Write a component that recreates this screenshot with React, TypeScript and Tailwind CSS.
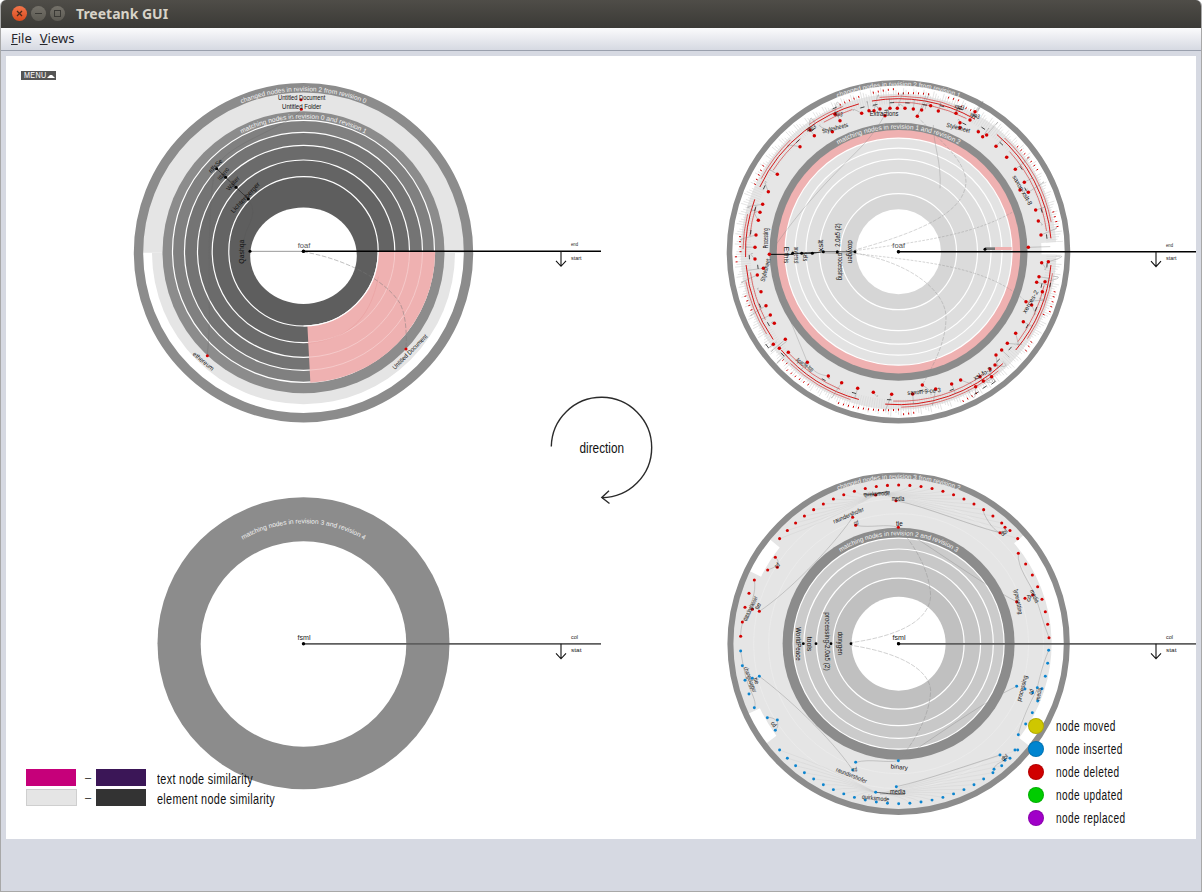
import React from "react";

const FONT = "'Liberation Sans', Arial, sans-serif";
const rad = (d: number) => (d * Math.PI) / 180;
const pt = (cx: number, cy: number, r: number, a: number): [number, number] => [cx + r * Math.cos(rad(a)), cy + r * Math.sin(rad(a))];

function sector(cx: number, cy: number, r0: number, r1: number, a0: number, a1: number) {
  const [x0, y0] = pt(cx, cy, r1, a0);
  const [x1, y1] = pt(cx, cy, r1, a1);
  const [x2, y2] = pt(cx, cy, r0, a1);
  const [x3, y3] = pt(cx, cy, r0, a0);
  const l = a1 - a0 > 180 ? 1 : 0;
  return `M${x0} ${y0}A${r1} ${r1} 0 ${l} 1 ${x1} ${y1}L${x2} ${y2}A${r0} ${r0} 0 ${l} 0 ${x3} ${y3}Z`;
}

function arcPath(cx: number, cy: number, r: number, a0: number, a1: number) {
  const [x0, y0] = pt(cx, cy, r, a0);
  const [x1, y1] = pt(cx, cy, r, a1);
  return `M${x0} ${y0}A${r} ${r} 0 ${a1 - a0 > 180 ? 1 : 0} 1 ${x1} ${y1}`;
}

function ArcText({ id, cx, cy, r, half, text, size = 6.6 }: { id: string; cx: number; cy: number; r: number; half: number; text: string; size?: number }) {
  const len = r * 2 * rad(half) * 0.98;
  return (
    <g>
      <defs>
        <path id={id} d={arcPath(cx, cy, r, -90 - half, -90 + half)} />
      </defs>
      <text fill="#f2f2f2" fontSize={size} fontFamily={FONT}>
        <textPath href={`#${id}`} startOffset="1%" textLength={len} lengthAdjust="spacingAndGlyphs">
          {text}
        </textPath>
      </text>
    </g>
  );
}

/* label inside a group scaled by 1/3 */
function Lb({ x, y, r = 0, len, t, fill = "#111", size = 19 }: { x: number; y: number; r?: number; len: number; t: string; fill?: string; size?: number }) {
  return (
    <text
      transform={`translate(${x} ${y}) rotate(${r})`}
      textAnchor="middle"
      dominantBaseline="central"
      fontSize={size}
      fontFamily={FONT}
      fill={fill}
      textLength={len}
      lengthAdjust="spacingAndGlyphs"
    >
      {t}
    </text>
  );
}

function Dots({ pts, fill, r = 4.5 }: { pts: number[][]; fill: string; r?: number }) {
  return (
    <g fill={fill}>
      {pts.map(([x, y], i) => (
        <circle key={i} cx={x} cy={y} r={r} />
      ))}
    </g>
  );
}

function Axis({ x, y, xEnd, a, b, color = "#000", w = 1.4 }: { x: number; y: number; xEnd: number; a: string; b: string; color?: string; w?: number }) {
  const ax = xEnd === 601 ? 561 : 1156;
  const lx = ax + 10;
  return (
    <g>
      <line x1={x} y1={y} x2={xEnd} y2={y} stroke={color} strokeWidth={w} />
      <circle cx={x} cy={y} r={1.7} fill="#000" />
      <path d={`M${ax} ${y}V${y + 15}M${ax - 5} ${y + 9.5}L${ax} ${y + 15}L${ax + 5} ${y + 9.5}`} fill="none" stroke="#111" strokeWidth={1.1} />
      <text x={lx} y={y - 5} fontSize={5.5} fontFamily={FONT} fill="#222" textLength={7} lengthAdjust="spacingAndGlyphs">{a}</text>
      <text x={lx} y={y + 8.5} fontSize={5.5} fontFamily={FONT} fill="#222" textLength={10.5} lengthAdjust="spacingAndGlyphs">{b}</text>
    </g>
  );
}

function ChartOne() {
  const cx = 303.5, cy = 251.3;
  const rings: [number, string][] = [[131, "#808080"], [119, "#747474"], [106, "#6b6b6b"], [91.3, "#646464"], [74.7, "#5e5e5e"]];
  return (
    <g>
      <path d={sector(cx, 252.7, 0, 161, 180, 360)} fill="#e5e5e5" />
      <path d={sector(cx, 252.7, 0, 151.5, 0, 180)} fill="#e5e5e5" />
      <circle cx={cx} cy={252.7} r={165} fill="none" stroke="#8c8c8c" strokeWidth={9.4} />
      <circle cx={cx} cy={252.3} r={141} fill="#8c8c8c" />
      {rings.map(([r, c]) => (
        <circle key={r} cx={cx} cy={cy} r={r} fill={c} stroke="#fff" strokeWidth={1.2} />
      ))}
      <path d={sector(cx, cy, 74.7, 131, 0, 87)} fill="#efb1b1" />
      <g fill="none" stroke="#f6cfcf" strokeWidth={0.8}>
        <path d={arcPath(cx, cy, 91.3, 0, 87)} />
        <path d={arcPath(cx, cy, 106, 0, 87)} />
        <path d={arcPath(cx, cy, 119, 0, 87)} />
      </g>
      <path d={arcPath(cx, cy, 74.7, 0, 90)} fill="none" stroke="#fff" strokeWidth={1.2} />
      <path d={arcPath(cx, cy, 131, 0, 87)} fill="none" stroke="#efb1b1" strokeWidth={1.2} />
      <ellipse cx={cx} cy={255.7} rx={53.3} ry={48.3} fill="#fff" />
      <ArcText id="a1" cx={cx} cy={252.7} r={161.6} half={23} text="changed nodes in revision 2 from revision 0" />
      <ArcText id="a2" cx={cx} cy={252.7} r={134.2} half={28} text="matching nodes in revision 0 and revision 1" />
      <g transform="translate(130 80) scale(0.33333)">
        <g fill="none" strokeWidth={1.4}>
          <path d="M513 90C500 110 440 140 380 170C320 200 270 230 258 266C240 300 235 500 238 700C238 760 234 800 232 827" stroke="#666" opacity={0.75} />
          <path d="M355 357C375 385 370 410 355 440C340 470 335 500 360 514" stroke="#555" opacity={0.7} />
          <path d="M260 266L287 292L318 322L355 357" stroke="#222" strokeWidth={2} />
          <path d="M360 514L520 514" stroke="#999" strokeWidth={3} />
          <path d="M520 516C620 530 760 590 810 670C830 710 830 770 828 807" stroke="#777" strokeDasharray="14 5" />
          <path d="M532 790C640 780 720 730 745 590" stroke="#e79a9a" />
        </g>
        <Dots fill="#000" r={4.6} pts={[[260, 266], [287, 292], [318, 322], [355, 357], [360, 514], [520, 514]]} />
        <Dots fill="#d40000" r={4.6} pts={[[513, 59], [514, 88], [232, 827], [828, 807]]} />
        <Lb x={515} y={52} len={142} t="Untitled Document" />
        <Lb x={515} y={80} len={118} t="Untitled Folder" />
        <Lb x={255} y={257} r={-45} len={50} t="rdfsSe" />
        <Lb x={279} y={281} r={-50} len={44} t="Ittarro" />
        <Lb x={308} y={310} r={-50} len={50} t="Walter" />
        <Lb x={345} y={352} r={-47} len={118} t="Lichtenberger" />
        <Lb x={335} y={515} r={-90} len={72} t="Qashqa" />
        <Lb x={221} y={843} r={40} len={76} t="ethereum" />
        <Lb x={839} y={815} r={-45} len={140} t="Untitled Document" />
        <Lb x={522} y={497} len={38} t="foaf" fill="#555" size={21} />
      </g>
      <Axis x={cx} y={251.3} xEnd={601} a="end" b="start" />
    </g>
  );
}

function ChartTwo() {
  const cx = 898.5, cy = 251.7;
  const rings: [number, string][] = [[113.5, "#e3e3e3"], [103.5, "#e1e1e1"], [92.5, "#dedede"], [79, "#dbdbdb"], [58, "#d6d6d6"]];
  const gapT: number[] = [];
  for (let a = -180; a < 180; a += 0.9) gapT.push(a);
  const red = [[-128, -105], [-100, -60], [-50, -5], [5, 40], [47, 95], [105, 140], [145, 175], [178, 200], [205, 232]];
  /* the short outer red marks come in bunches, with long empty stretches between them */
  const bunches = [[-112, -104], [-100, -78], [-72, -62], [-42, -30], [-16, -8], [14, 24], [34, 38], [60, 68], [84, 112], [124, 138], [158, 164], [176, 186], [205, 214]];
  const inBunch = (a: number) => bunches.some(([p, q]) => a >= p && a <= q) || bunches.some(([p, q]) => a + 360 >= p && a + 360 <= q);
  const dots = [[425, 115], [447, 107], [462, 107], [480, 102], [510, 100], [532, 100], [555, 100], [580, 102], [605, 105], [632, 92], [655, 108], [592, 124], [495, 122], [360, 137], [345, 118], [337, 170], [283, 182], [270, 165], [240, 215], [172, 298], [145, 350], [128, 388], [120, 412], [115, 436], [108, 480], [105, 517], [105, 552], [112, 600], [130, 580], [123, 650], [138, 692], [151, 720], [163, 745], [196, 793], [160, 808], [178, 820], [205, 832], [262, 862], [325, 903], [365, 923], [413, 940], [460, 952], [515, 958], [578, 957], [607, 930], [647, 942], [695, 927], [722, 915], [767, 935], [780, 905], [790, 918], [810, 882], [815, 905], [825, 870], [828, 840], [845, 825], [862, 805], [887, 775], [910, 740], [918, 680], [935, 690], [957, 605], [975, 620], [967, 650], [950, 622], [985, 560], [965, 563], [925, 517], [963, 480], [955, 438], [947, 405], [925, 352], [900, 345], [913, 322], [886, 283], [860, 247], [828, 214], [800, 180], [775, 170], [788, 185], [750, 135], [720, 143], [708, 115], [765, 110], [720, 158]];
  const bx = 536, by = 530;
  return (
    <g>
      <circle cx={cx} cy={cy} r={158} fill="#e6e6e6" />
      <g stroke="#d8d8d8" strokeWidth={0.7}>
        {gapT.map((a) => {
          const w = ((a * 37) % 7 + 7) % 7;
          const [x0, y0] = pt(cx, cy, 148, a);
          const [x1, y1] = pt(cx, cy, 158 + w, a);
          return <line key={a} x1={x0} y1={y0} x2={x1} y2={y1} />;
        })}
      </g>
      <path d={sector(cx, cy, 143, 168, -3.5, 1)} fill="#fff" />
      <circle cx={cx} cy={cy} r={169} fill="none" stroke="#8c8c8c" strokeWidth={5.6} />
      <circle cx={cx} cy={cy} r={129} fill="#8c8c8c" />
      <circle cx={cx} cy={cy} r={121.7} fill="#efb1b1" />
      {rings.map(([r, c]) => (
        <circle key={r} cx={cx} cy={cy} r={r} fill={c} stroke="#fff" strokeWidth={1.2} />
      ))}
      <circle cx={cx} cy={cy} r={42.5} fill="#fff" />
      <ArcText id="b1" cx={cx} cy={cy} r={165.6} half={22} text="changed nodes in revision 2 from revision 1" />
      <ArcText id="b2" cx={cx} cy={cy} r={123} half={30} text="matching nodes in revision 1 and revision 2" />
      <g fill="none" stroke="#d20000">
        {red.map(([a, b], i) => (
          <g key={i}>
            <path d={arcPath(cx, cy, 153, a, b)} strokeWidth={0.9} />
            <path d={arcPath(cx, cy, 155.5, a + 3, b - 6)} strokeWidth={0.5} />
            <path d={arcPath(cx, cy, 149.5, a + 8, b - 3)} strokeWidth={0.5} />
          </g>
        ))}
      </g>
      <g stroke="#d20000" strokeWidth={1}>
        {gapT.filter((a, i) => i % 2 === 0 && inBunch(a)).map((a) => {
          const k = ((a * 53) % 5 + 5) % 5;
          const [x0, y0] = pt(cx, cy, 157 + k, a);
          const [x1, y1] = pt(cx, cy, 159 + k, a);
          return <line key={a} x1={x0} y1={y0} x2={x1} y2={y1} />;
        })}
      </g>
      <g transform="translate(720 75) scale(0.33333)">
        <g fill="none" stroke="#7d7d7d" strokeWidth={1.1}>
          {dots.map(([x, y], i) => {
            const dx = x - bx, dy = y - by;
            const d = Math.hypot(dx, dy);
            const rr = 455 / d;
            const o = (i % 3) * 22 - 22;
            return <path key={i} d={`M${x} ${y}Q${x + dx * 0.1 + o} ${y + dy * 0.1 - o} ${bx + dx * rr + o * 0.8} ${by + dy * rr - o * 0.8}`} />;
          })}
        </g>
        <g fill="none" stroke="#222" strokeWidth={2.4}>
          {dots.filter((_, i) => i % 2 === 0).map(([x, y], i) => {
            const dx = (x - bx) / 26, dy = (y - by) / 26;
            return <path key={i} d={`M${x + dx} ${y + dy}l${-dy * 0.8} ${dx * 0.8}`} />;
          })}
        </g>
        <g fill="none" stroke="#8a8a8a" strokeWidth={1.1}>
          <path d="M148 538C240 400 340 300 400 240C430 210 460 180 492 124" />
          <path d="M592 124C650 190 735 250 738 320C735 400 640 460 405 525" strokeDasharray="12 4" />
          <path d="M405 535C560 560 670 640 678 720C680 800 640 870 607 930" strokeDasharray="12 4" />
          <path d="M148 538C170 650 230 780 262 862C285 900 310 900 325 903" />
          <path d="M405 527C600 500 760 480 880 410" strokeDasharray="8 4" />
          <path d="M405 535C600 560 800 570 918 680" strokeDasharray="8 4" />
          <path d="M640 150C640 210 665 260 660 340" />
        </g>
        <path d="M148 538H218" stroke="#000" strokeWidth={3} />
        <path d="M218 535H277L310 530" stroke="#333" strokeWidth={3} />
        <path d="M310 530H405" stroke="#777" strokeWidth={4} />
        <path d="M405 538L310 534" stroke="#bbb" strokeWidth={3} />
        <rect x={795} y={517} width={30} height={8} fill="#777" />
        <rect x={825} y={516} width={50} height={9} fill="#efb1b1" />
        <Dots fill="#d40000" r={5.2} pts={dots} />
        <Dots fill="#d40000" r={5.2} pts={[[148, 538]]} />
        <Dots fill="#000" r={4.5} pts={[[218, 535], [245, 535], [277, 535], [310, 530], [352, 530], [405, 530], [535, 530], [795, 523]]} />
        <Lb x={492} y={116} len={86} t="Extractions" />
        <Lb x={345} y={158} r={-15} len={80} t="Stylesheets" />
        <Lb x={715} y={157} r={15} len={72} t="Stylesheet" />
        <Lb x={355} y={115} r={10} len={26} t="xpp3" />
        <Lb x={272} y={158} r={-25} len={30} t="xpp3" />
        <Lb x={718} y={95} r={12} len={30} t="xpp3" />
        <Lb x={765} y={120} r={20} len={30} t="xpp3" />
        <Lb x={908} y={345} r={60} len={100} t="saxon-xslt-8" />
        <Lb x={930} y={680} r={-60} len={76} t="xerces-2" />
        <Lb x={787} y={895} r={-30} len={60} t="xsl-fo-2" />
        <Lb x={612} y={948} r={-5} len={100} t="saxon-9-ce-3" />
        <Lb x={255} y={868} r={35} len={60} t="Apache-fop" />
        <Lb x={137} y={490} r={-90} len={60} t="Processing" />
        <Lb x={135} y={585} r={-75} len={70} t="Stylesheet" />
        <Lb x={200} y={540} r={90} len={50} t="E:this" />
        <Lb x={230} y={540} r={90} len={50} t="oxygenxsl" />
        <Lb x={258} y={545} r={90} len={26} t="sets" />
        <Lb x={301} y={512} r={-90} len={36} t="xslt" />
        <Lb x={352} y={480} r={-90} len={70} t="2.0a5 (2)" />
        <Lb x={362} y={575} r={90} len={80} t="processing" />
        <Lb x={391} y={530} r={90} len={68} t="doxygen" />
        <Lb x={536} y={512} len={38} t="foaf" fill="#555" size={21} />
      </g>
      <Axis x={cx} y={251.7} xEnd={1196} a="end" b="start" />
    </g>
  );
}

function ChartThree() {
  const cx = 303.5, cy = 643.3;
  return (
    <g>
      <circle cx={cx} cy={cy} r={146} fill="#8c8c8c" />
      <circle cx={cx} cy={644} r={102.8} fill="#fff" />
      <ArcText id="c1" cx={cx} cy={cy} r={120} half={31} text="matching nodes in revision 3 and revision 4" />
      <text x={304} y={640} textAnchor="middle" fontSize={7} fontFamily={FONT} fill="#222" textLength={13} lengthAdjust="spacingAndGlyphs">fsml</text>
      <Axis x={cx} y={643.8} xEnd={601} a="col" b="stat" color="#5f5f5f" w={1.8} />
    </g>
  );
}

function ChartFour() {
  const cx = 898.6, cy = 643.7;
  const bx = 536, by = 522;
  const top: number[][] = [];
  for (let k = -12; k <= 12; k++) {
    const [x, y] = pt(bx, by, 477, -90 + k * 4.04);
    top.push([x, y]);
  }
  const side = [[166, 262], [143, 300], [172, 292], [103, 330], [87, 370], [75, 412], [67, 456], [62, 499], [97, 418], [118, 424], [895, 250], [917, 282], [937, 315], [953, 350], [966, 388], [976, 425], [983, 463], [987, 503], [938, 375], [915, 385], [890, 395], [535, 172], [407, 166], [398, 142], [467, 75], [528, 92], [840, 188], [855, 172]];
  const blueTop = top.map(([x, y]) => [x, 2 * by - y + 2]);
  const blueSide = [[62, 543], [67, 587], [75, 631], [87, 672], [103, 713], [97, 625], [118, 619], [142, 743], [172, 750], [166, 781], [407, 877], [398, 900], [529, 950], [535, 872], [467, 967], [840, 855], [855, 871], [822, 898], [885, 840], [986, 541], [983, 580], [976, 619], [966, 656], [953, 693], [937, 728], [917, 762], [895, 794], [890, 649], [915, 657], [938, 668], [952, 653]];
  const ringR: [number, string][] = [[105.5, "#cbcbcb"], [94.7, "#c8c8c8"], [82, "#c5c5c5"], [65.5, "#c0c0c0"]];
  return (
    <g>
      <circle cx={cx} cy={cy} r={166} fill="#e5e5e5" />
      <g fill="#fff">
        <path d={sector(cx, cy, 153, 167, 206, 219)} />
        <path d={sector(cx, cy, 153, 167, 319, 398)} />
        <path d={sector(cx, cy, 153, 167, 143, 155)} />
      </g>
      <circle cx={cx} cy={cy} r={168.2} fill="none" stroke="#8c8c8c" strokeWidth={6} />
      <g fill="none" stroke="#efefef" strokeWidth={0.6}>
        <circle cx={cx} cy={cy} r={130} />
        <circle cx={cx} cy={cy} r={145} />
      </g>
      <circle cx={cx} cy={cy} r={116} fill="#8c8c8c" />
      {ringR.map(([r, c]) => (
        <circle key={r} cx={cx} cy={cy} r={r} fill={c} stroke="#fff" strokeWidth={1.2} />
      ))}
      <circle cx={cx} cy={cy} r={47} fill="#fff" />
      <ArcText id="d1" cx={cx} cy={cy} r={165} half={22} text="changed nodes in revision 3 from revision 2" />
      <ArcText id="d2" cx={cx} cy={cy} r={108.5} half={33} text="matching nodes in revision 2 and revision 3" />
      <g transform="translate(720 470) scale(0.33333)">
        <g fill="none" stroke="#cacaca" strokeWidth={0.9}>
          {top.filter(([x]) => x < 440).map(([x, y], i) => (
            <path key={i} d={`M${x} ${y}Q${(x + 467) / 2} ${(y + 75) / 2 + 14} 467 75`} />
          ))}
          {top.filter(([x]) => x > 560).map(([x, y], i) => (
            <path key={i} d={`M${x} ${y}Q${(x + 528) / 2} ${(y + 80) / 2 + 6} 480 70`} />
          ))}
          {blueTop.filter(([x]) => x < 440).map(([x, y], i) => (
            <path key={i} d={`M${x} ${y}Q${(x + 467) / 2} ${(y + 967) / 2 - 14} 467 967`} />
          ))}
          {blueTop.filter(([x]) => x > 560).map(([x, y], i) => (
            <path key={i} d={`M${x} ${y}Q${(x + 528) / 2} ${(y + 965) / 2 - 6} 480 972`} />
          ))}
        </g>
        <g fill="none" stroke="#8b8b8b" strokeWidth={1.2}>
          <path d="M535 172C580 220 630 300 632 380C625 460 520 500 393 518" strokeDasharray="14 4" />
          <path d="M535 872C580 820 630 740 632 660C625 590 520 545 393 526" strokeDasharray="14 4" />
          <path d="M535 172C620 220 780 340 890 395" />
          <path d="M535 872C620 820 780 700 890 649" />
          <path d="M118 424C200 370 330 240 398 142" />
          <path d="M118 619C200 680 330 800 398 900" />
          <path d="M407 166C450 175 500 160 535 172" />
          <path d="M407 877C450 865 500 880 535 872" />
          <path d="M528 92C620 110 760 170 840 188" />
          <path d="M529 950C620 930 760 880 840 855" />
          <path d="M895 250C890 290 930 340 945 375C960 420 970 460 987 503" />
          <path d="M986 541C965 590 955 640 950 660C930 700 905 750 895 794" />
          <path d="M103 330C110 370 90 400 90 415C70 440 62 470 62 499" />
          <path d="M62 543C70 590 75 620 87 650C100 680 110 700 103 713" />
          <path d="M166 262C185 280 170 290 143 300" />
          <path d="M142 743C165 740 185 760 166 781" />
          <path d="M840 188C815 180 790 130 790 123" />
          <path d="M855 871C830 880 822 890 822 898" />
        </g>
        <path d="M430 72C470 78 500 60 510 66" fill="none" stroke="#222" strokeWidth={2} />
        <path d="M467 967C490 968 520 975 555 972" fill="none" stroke="#222" strokeWidth={2} />
        <Dots fill="#d40000" r={4.6} pts={[...top, ...side]} />
        <Dots fill="#0b84cf" r={4.4} pts={[...blueTop, ...blueSide]} />
        <Dots fill="#000" r={4.2} pts={[[250, 521], [288, 521], [333, 521], [393, 521], [535, 521]]} />
        <Lb x={470} y={70} r={-3} len={78} t="quirksmode" />
        <Lb x={534} y={87} len={38} t="media" />
        <Lb x={538} y={162} len={20} t="tie" />
        <Lb x={385} y={135} r={-23} len={98} t="raundershofer" />
        <Lb x={408} y={157} r={-10} len={14} t="cd" />
        <Lb x={170} y={285} r={-40} len={14} t="cd" />
        <Lb x={90} y={415} r={-65} len={80} t="dataJoglasser" />
        <Lb x={113} y={408} r={-65} len={20} t="tie" />
        <Lb x={851} y={187} r={-40} len={22} t="dbl" />
        <Lb x={896} y={395} r={80} len={76} t="typesetting" />
        <Lb x={925} y={385} r={-78} len={20} t="cd" />
        <Lb x={945} y={378} r={65} len={42} t="media" />
        <Lb x={235} y={522} r={90} len={100} t="WorldPeace" />
        <Lb x={268} y={522} r={90} len={44} t="tools" />
        <Lb x={324} y={514} r={90} len={175} t="processing-2.0a5 (2)" />
        <Lb x={362} y={520} r={90} len={70} t="doxygen" />
        <Lb x={538} y={890} r={5} len={52} t="binary" />
        <Lb x={404} y={897} r={-10} len={14} t="cd" />
        <Lb x={395} y={915} r={22} len={98} t="raundershofer" />
        <Lb x={533} y={965} len={46} t="media" />
        <Lb x={467} y={983} r={6} len={82} t="quirksmode" />
        <Lb x={853} y={862} r={-40} len={22} t="dbl" />
        <Lb x={905} y={655} r={-75} len={80} t="processing" />
        <Lb x={932} y={665} r={-72} len={16} t="cd" />
        <Lb x={955} y={672} r={-80} len={38} t="media" />
        <Lb x={92} y={628} r={70} len={80} t="changelogger" />
        <Lb x={110} y={632} r={70} len={20} t="tie" />
        <Lb x={162} y={762} r={50} len={16} t="cd" />
      </g>
      <text x={899} y={639.5} textAnchor="middle" fontSize={7} fontFamily={FONT} fill="#222" textLength={13} lengthAdjust="spacingAndGlyphs">fsml</text>
      <Axis x={cx} y={643.8} xEnd={1196} a="col" b="stat" color="#5f5f5f" w={1.8} />
    </g>
  );
}

function Direction() {
  return (
    <g>
      <path d="M551.3 446.5A50.2 50.2 0 1 1 602 497.7" fill="none" stroke="#2b2b2b" strokeWidth={1.4} />
      <path d="M609 490.8L601.8 497.5L609.5 503.5" fill="none" stroke="#2b2b2b" strokeWidth={1.4} />
      <text x={579.5} y={453} fontSize={14} fontFamily={FONT} fill="#111" textLength={44.5} lengthAdjust="spacingAndGlyphs">direction</text>
    </g>
  );
}

const nodes = [
  { c: "bg-[#cfc700]", t: "node moved" },
  { c: "bg-[#0085d0]", t: "node inserted" },
  { c: "bg-[#d00000]", t: "node deleted" },
  { c: "bg-[#00cc00]", t: "node updated" },
  { c: "bg-[#a000c8]", t: "node replaced" },
];

export default function App() {
  return (
    <div
      className="flex h-[892px] w-[1202px] flex-col overflow-hidden rounded-t-[6px] border-x border-b border-x-[#a8a8a8] border-b-[#a8a8a8] bg-[#d6d9e2]"
      style={{ fontFamily: "'Noto Sans', sans-serif" }}
    >
      <div className="flex h-[28px] items-center bg-gradient-to-b from-[#4f4d48] to-[#3b3a36] pl-[11px] pb-[1px]">
        <div className="flex items-center gap-[4px]">
          <span className="flex h-[15px] w-[15px] items-center justify-center rounded-full bg-gradient-to-b from-[#f2754a] to-[#d94a1c] text-[#4a2a1a]">
            <svg width="7" height="7" viewBox="0 0 7 7" fill="none" stroke="currentColor" strokeWidth="1.3"><path d="M1 1l5 5M6 1L1 6" /></svg>
          </span>
          <span className="flex h-[15px] w-[15px] items-center justify-center rounded-full bg-gradient-to-b from-[#75726a] to-[#5c5a53]">
            <span className="h-[1.5px] w-[7px] bg-[#3a3935]" />
          </span>
          <span className="flex h-[15px] w-[15px] items-center justify-center rounded-full bg-gradient-to-b from-[#75726a] to-[#5c5a53]">
            <span className="h-[7px] w-[7px] border border-[#3a3935]" />
          </span>
        </div>
        <span className="ml-[11px] text-[14px] leading-none font-bold text-[#d8d3c8]">Treetank GUI</span>
      </div>
      <div className="flex h-[23px] items-center gap-[8px] border-b border-[#9aa0ad] bg-gradient-to-b from-[#fbfbfc] to-[#d6d9e2] pl-[10px] text-[13px] text-[#26262c]">
        <span className="underline decoration-transparent"><span className="underline decoration-[#26262c]">F</span>ile</span>
        <span className="underline decoration-transparent"><span className="underline decoration-[#26262c]">V</span>iews</span>
      </div>
      <div className="flex flex-1 flex-col px-[5px] pt-[5px] pb-[52px]">
        <div className="relative flex-1 bg-white">
          <svg viewBox="6 56 1190 783" className="block h-full w-full">
            <ChartOne />
            <ChartTwo />
            <ChartThree />
            <ChartFour />
            <Direction />
          </svg>
          <div className="absolute top-[15px] left-[15px] flex h-[9px] w-[35px] items-center bg-[#555] pl-[3px] text-[9px] leading-none text-white" style={{ fontFamily: "'Liberation Sans', sans-serif" }}>
            <span className="inline-block w-[23px] origin-left scale-x-[0.8] tracking-[0.4px]">MENU</span>
            <svg width="8" height="4" viewBox="0 0 8 4"><path d="M0 4L3 1H5L8 4Z" fill="#fff" /></svg>
          </div>
          <div className="absolute top-[713px] left-[20px] flex flex-col gap-[3px] text-[14px] leading-none text-[#111]" style={{ fontFamily: "'Liberation Sans', sans-serif" }}>
            <div className="flex h-[17px] items-center">
              <span className="h-[17px] w-[50px] bg-[#c6007a]" />
              <span className="mx-[9px] w-[2px] text-[11px]">–</span>
              <span className="h-[17px] w-[50px] bg-[#3b1657]" />
              <span className="ml-[11px] inline-block origin-left scale-x-[0.775] pt-[2px] tracking-[0.4px] whitespace-nowrap">text node similarity</span>
            </div>
            <div className="flex h-[17px] items-center">
              <span className="h-[17px] w-[51px] border border-[#cfcfcf] bg-[#e5e5e5]" />
              <span className="mr-[9px] ml-[8px] w-[2px] text-[11px]">–</span>
              <span className="h-[17px] w-[50px] bg-[#333]" />
              <span className="ml-[11px] inline-block origin-left scale-x-[0.775] pt-[2px] tracking-[0.4px] whitespace-nowrap">element node similarity</span>
            </div>
          </div>
          <div className="absolute top-[661px] left-[1022px] flex flex-col gap-[6px] text-[14px] leading-none text-[#111]" style={{ fontFamily: "'Liberation Sans', sans-serif" }}>
            {nodes.map((n) => (
              <div key={n.t} className="flex h-[17px] items-center gap-[12px]">
                <span className={`h-[16px] w-[16px] rounded-full border border-[#00000022] ${n.c}`} />
                <span className="inline-block origin-left scale-x-[0.72] tracking-[0.6px] whitespace-nowrap">{n.t}</span>
              </div>
            ))}
          </div>
        </div>
      </div>
    </div>
  );
}
